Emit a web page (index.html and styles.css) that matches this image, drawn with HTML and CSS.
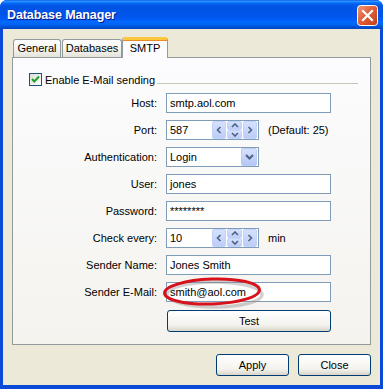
FILE: index.html
```html
<!DOCTYPE html>
<html lang="en">
<head>
    <meta charset="UTF-8">
    <title>Database Manager</title>
    <link rel="stylesheet" href="styles.css">
</head>
<body>
    <div class="window">
        <div class="titlebar">
            <span class="title">Database Manager</span>
            <span class="close-box">
                <svg width="21" height="21" viewBox="0 0 21 21">
                    <defs>
                        <linearGradient id="cg" x1="0" y1="0" x2="1" y2="1">
                            <stop offset="0" stop-color="#f09a7c"/>
                            <stop offset="0.45" stop-color="#e2603b"/>
                            <stop offset="1" stop-color="#c23c16"/>
                        </linearGradient>
                    </defs>
                    <rect x="0.5" y="0.5" width="20" height="20" rx="3" fill="url(#cg)" stroke="#ffffff"/>
                    <path d="M6 6 L15 15 M15 6 L6 15" stroke="#ffffff" stroke-width="2.2" stroke-linecap="square"/>
                </svg>
            </span>
        </div>

        <div class="client">
            <div class="tabs">
                <div class="tab tab-general">General</div>
                <div class="tab tab-db">Databases</div>
                <div class="tab tab-smtp active">SMTP</div>
            </div>

            <div class="panel">
                <div class="group-head">
                    <span class="checkbox">
                        <svg width="11" height="11" viewBox="0 0 11 11">
                            <path d="M2 5 L4.3 7.5 L9 2.5" fill="none" stroke="#21a121" stroke-width="2"/>
                        </svg>
                    </span>
                    <span class="group-title">Enable E-Mail sending</span>
                    <span class="group-line"></span>
                </div>

                <div class="form">
                    <div class="label">Host:</div>
                    <div class="field"><div class="input wide">smtp.aol.com</div></div>

                    <div class="label">Port:</div>
                    <div class="field">
                        <div class="input spin">
                            <span class="value">587</span>
                            <span class="spin-btn side">
                                <svg width="6" height="8" viewBox="0 0 6 8"><path d="M4.5 1 L1.5 4 L4.5 7" fill="none" stroke="#4d6185" stroke-width="1.6"/></svg>
                            </span>
                            <span class="spin-mid">
                                <span class="spin-btn half"><svg width="8" height="5" viewBox="0 0 8 5"><path d="M1 4 L4 1 L7 4" fill="none" stroke="#4d6185" stroke-width="1.6"/></svg></span>
                                <span class="spin-btn half"><svg width="8" height="5" viewBox="0 0 8 5"><path d="M1 1 L4 4 L7 1" fill="none" stroke="#4d6185" stroke-width="1.6"/></svg></span>
                            </span>
                            <span class="spin-btn side">
                                <svg width="6" height="8" viewBox="0 0 6 8"><path d="M1.5 1 L4.5 4 L1.5 7" fill="none" stroke="#4d6185" stroke-width="1.6"/></svg>
                            </span>
                        </div>
                        <span class="hint">(Default: 25)</span>
                    </div>

                    <div class="label">Authentication:</div>
                    <div class="field">
                        <div class="input combo">
                            <span class="value">Login</span>
                            <span class="drop-btn">
                                <svg width="9" height="6" viewBox="0 0 9 6"><path d="M1 1 L4.5 4.5 L8 1" fill="none" stroke="#4d6185" stroke-width="2"/></svg>
                            </span>
                        </div>
                    </div>

                    <div class="label">User:</div>
                    <div class="field"><div class="input wide">jones</div></div>

                    <div class="label">Password:</div>
                    <div class="field"><div class="input wide">********</div></div>

                    <div class="label">Check every:</div>
                    <div class="field">
                        <div class="input spin">
                            <span class="value">10</span>
                            <span class="spin-btn side">
                                <svg width="6" height="8" viewBox="0 0 6 8"><path d="M4.5 1 L1.5 4 L4.5 7" fill="none" stroke="#4d6185" stroke-width="1.6"/></svg>
                            </span>
                            <span class="spin-mid">
                                <span class="spin-btn half"><svg width="8" height="5" viewBox="0 0 8 5"><path d="M1 4 L4 1 L7 4" fill="none" stroke="#4d6185" stroke-width="1.6"/></svg></span>
                                <span class="spin-btn half"><svg width="8" height="5" viewBox="0 0 8 5"><path d="M1 1 L4 4 L7 1" fill="none" stroke="#4d6185" stroke-width="1.6"/></svg></span>
                            </span>
                            <span class="spin-btn side">
                                <svg width="6" height="8" viewBox="0 0 6 8"><path d="M1.5 1 L4.5 4 L1.5 7" fill="none" stroke="#4d6185" stroke-width="1.6"/></svg>
                            </span>
                        </div>
                        <span class="hint">min</span>
                    </div>

                    <div class="label">Sender Name:</div>
                    <div class="field"><div class="input wide">Jones Smith</div></div>

                    <div class="label">Sender E-Mail:</div>
                    <div class="field"><div class="input wide">smith@aol.com</div></div>

                    <div class="label"></div>
                    <div class="field test-row"><button class="xp-button test">Test</button></div>
                </div>
            </div>

            <div class="footer">
                <button class="xp-button">Apply</button>
                <button class="xp-button">Close</button>
            </div>
        </div>

        <!-- red marker drawn around the e-mail field -->
        <svg class="marker" width="112" height="38" viewBox="0 0 112 38">
            <ellipse cx="50" cy="16" rx="47.5" ry="12.5" fill="none" stroke="#8c8c8c" stroke-opacity="0.4" stroke-width="3.5" transform="translate(2.5 2.5)"/>
            <ellipse cx="50" cy="15.5" rx="47.5" ry="12.5" fill="none" stroke="#d8121c" stroke-width="3" transform="rotate(-2 50 15.5)"/>
        </svg>
    </div>
</body>
</html>
```

FILE: styles.css
```css
/* Basic reset */
* {
    margin: 0;
    padding: 0;
    box-sizing: border-box;
}
body {
    font-family: 'Liberation Sans', Arial, sans-serif;
    font-size: 11px;
    color: #000000;
    background-color: #ffffff;
}
/* Window frame */
.window {
    position: relative;
    width: 383px;
    height: 389px;
    display: flex;
    flex-direction: column;
    background-color: #0b4ad8;
    border-radius: 7px 7px 0 0;
    overflow: hidden;
}
.titlebar {
    height: 29px;
    flex: none;
    display: flex;
    align-items: center;
    justify-content: space-between;
    padding: 0 5px 0 7px;
    background: linear-gradient(to bottom, #0058ee 0%, #3593ff 4%, #288eff 6%, #127dff 8%, #036ffc 10%, #0262ee 14%, #0057e5 20%, #0054e3 24%, #0055eb 56%, #005bf5 66%, #026afe 76%, #0062ef 86%, #0052d6 92%, #0046c0 100%);
}
.title {
    color: #ffffff;
    font-weight: 700;
    font-size: 12.5px;
    letter-spacing: -0.1px;
    text-shadow: 1px 1px 0 #0a1883;
    margin-top: 1px;
}
.close-box {
    display: flex;
    width: 21px;
    height: 21px;
    margin-top: 2px;
}
/* Client area */
.client {
    flex: 1;
    margin: 0 3px 4px 3px;
    padding: 8px 9px 0 9px;
    background-color: #ece9d8;
    display: flex;
    flex-direction: column;
}
/* Tabs */
.tabs {
    height: 20px;
    display: flex;
    align-items: flex-end;
    margin-left: 1px;
    position: relative;
    z-index: 1;
}
.tab {
    height: 18px;
    line-height: 17px;
    text-align: center;
    border: 1px solid #919b9c;
    border-bottom: none;
    border-radius: 3px 3px 0 0;
    background: linear-gradient(#ffffff, #f3f3ef 60%, #e4e2d9);
}
.tab-general {
    width: 48px;
}
.tab-db {
    width: 60px;
    margin-left: 1px;
}
.tab-smtp {
    width: 46px;
}
.tab.active {
    height: 21px;
    margin-bottom: -1px;
    line-height: 17px;
    background: #fcfcfe;
    border-top: 3px solid #ffc83c;
    box-shadow: inset 0 1px 0 #e68b2c;
}
/* Panel */
.panel {
    width: 359px;
    height: 288px;
    flex: none;
    border: 1px solid #919b9c;
    background: linear-gradient(#fcfcfe, #f4f3ee);
    padding-top: 15px;
}
.group-head {
    height: 13px;
    display: flex;
    align-items: center;
    padding-left: 16px;
    margin-right: 12px;
}
.checkbox {
    width: 13px;
    height: 13px;
    flex: none;
    display: flex;
    align-items: center;
    justify-content: center;
    border: 1px solid #1c5180;
    background: linear-gradient(135deg, #dcdcd7, #ffffff);
}
.group-title {
    margin-left: 3px;
    white-space: nowrap;
}
.group-line {
    flex: 1;
    height: 1px;
    align-self: flex-end;
    margin: 0 0 2px 2px;
    background-color: #c7c6b8;
}
/* Form grid */
.form {
    display: grid;
    grid-template-columns: 144px 1fr;
    grid-auto-rows: 20px;
    column-gap: 9px;
    row-gap: 7px;
    margin-top: 7px;
}
.label {
    text-align: right;
    line-height: 20px;
    white-space: nowrap;
}
.field {
    display: flex;
    align-items: center;
}
.input {
    height: 20px;
    border: 1px solid #7f9db9;
    background-color: #ffffff;
    line-height: 18px;
    padding-left: 3px;
}
.wide {
    width: 165px;
}
.spin,
.combo {
    width: 93px;
    display: flex;
    align-items: center;
    padding-right: 1px;
}
.value {
    flex: 1;
}
.spin-btn {
    display: flex;
    align-items: center;
    justify-content: center;
    background: linear-gradient(#d6e1fd, #bccdf7);
    border: 1px solid #c3d2f7;
    border-radius: 2px;
}
.side {
    width: 14px;
    height: 18px;
}
.spin-mid {
    width: 15px;
    height: 18px;
    margin: 0 1px;
    display: flex;
    flex-direction: column;
}
.half {
    height: 9px;
}
.drop-btn {
    width: 16px;
    height: 18px;
    display: flex;
    align-items: center;
    justify-content: center;
    background: linear-gradient(#d6e1fd, #b4c7f5);
    border: 1px solid #bccbf2;
    border-radius: 2px;
}
.hint {
    margin-left: 9px;
}
.test-row {
    align-items: flex-start;
}
/* Buttons */
.xp-button {
    font-family: 'Liberation Sans', Arial, sans-serif;
    font-size: 11px;
    color: #000000;
    height: 22px;
    border: 1px solid #003c74;
    border-radius: 3px;
    background: linear-gradient(#ffffff, #f4f3ee 70%, #d9d5c9);
}
.test {
    width: 164px;
    margin: 1px 0 0 1px;
}
.footer {
    display: flex;
    justify-content: flex-end;
    gap: 9px;
    margin-top: 9px;
}
.footer .xp-button {
    width: 73px;
}
/* Annotation overlay */
.marker {
    position: absolute;
    left: 162px;
    top: 276px;
}
```
